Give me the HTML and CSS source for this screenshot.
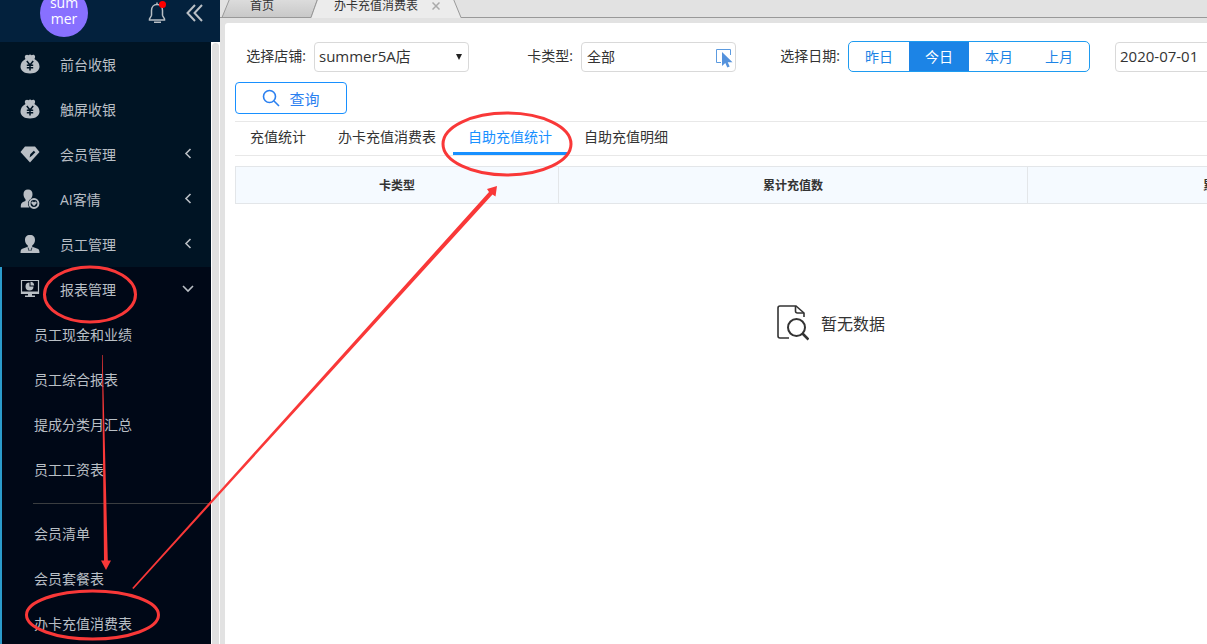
FILE: index.html
```html
<!DOCTYPE html>
<html lang="zh-CN">
<head>
    <meta charset="UTF-8">
    <meta name="viewport" content="width=device-width, initial-scale=1.0">
    <title>办卡充值消费表</title>
    <link rel="stylesheet" href="styles.css">
</head>
<body>
    <svg class="symbols" aria-hidden="true">
        <symbol id="icon-money" viewBox="0 0 20 20">
            <path fill="currentColor" d="M5.500 5C4.600 3.600 4.600 2 5.500 1.200c1.200-.9 2.200-.6 3 0 .9-.8 2.200-.8 3.100 0 .8-.6 2-.8 2.900 0 .9.8.8 2.400-.1 3.800 3 1.600 5.100 4.200 5.100 7.500 0 4.200-3.700 7-9.500 7S.5 16.700.5 12.500C.5 9.200 2.500 6.600 5.500 5z"/>
            <path fill="none" stroke="#001424" stroke-width="1.500" d="M6.800 7L10 11l3.200-4M10 11v5.500M6.800 11.300h6.400M6.800 13.800h6.400"/>
        </symbol>
        <symbol id="icon-left" viewBox="0 0 12 12">
            <path fill="none" stroke="currentColor" stroke-width="1.600" d="M8.500 1L4 5.500 8.500 10"/>
        </symbol>
    </svg>

    <div class="layout">
        <aside class="sidebar">
            <div class="user-bar">
                <div class="avatar">sum<br>mer</div>
                <button class="icon-btn bell" aria-label="消息">
                    <svg width="18" height="22" viewBox="0 0 18 22" fill="none" stroke="currentColor" stroke-width="1.500">
                        <path d="M3.500 14.500V9.500C3.500 6 5.700 3.500 9 3.500s5.500 2.500 5.500 6v5M3.500 14.500L1.500 18v1h15v-1l-2-3.500M6 21.200h7M9 1.500v2"/>
                    </svg>
                    <span class="dot"></span>
                </button>
                <button class="icon-btn" aria-label="收起">
                    <svg width="18" height="18" viewBox="0 0 18 18" fill="none" stroke="currentColor" stroke-width="2">
                        <path d="M9 1L1.500 9 9 17M16 1L8.500 9l7.500 8"/>
                    </svg>
                </button>
            </div>
            <div class="nav-wrap">
                <nav class="nav">
                    <a class="nav-item" href="#"><svg class="nav-icon"><use href="#icon-money"/></svg>前台收银</a>
                    <a class="nav-item" href="#"><svg class="nav-icon"><use href="#icon-money"/></svg>触屏收银</a>
                    <a class="nav-item" href="#">
                        <svg class="nav-icon" viewBox="0 0 20 20">
                            <path fill="currentColor" d="M5 2.500h10L19.500 8 10 18.500.5 8z"/>
                            <path fill="none" stroke="#001424" stroke-width="1.200" d="M10.500 12l.3-1.500 3-3 .7.700-3 3z"/>
                        </svg>会员管理
                        <svg class="arrow"><use href="#icon-left"/></svg>
                    </a>
                    <a class="nav-item" href="#">
                        <svg class="nav-icon" viewBox="0 0 20 20">
                            <path fill="currentColor" d="M8 .5c3 0 4.500 2 4.500 4.800 0 2-.7 3.600-1.800 4.700C9 11 8 12.500 8 14.500c0 1.800.6 3 1.500 4H.8c0-4.500.7-5 4.700-6.500v-1.800C4.300 9 3.500 7.200 3.500 5.300 3.500 2.500 5 .5 8 .5z"/>
                            <circle cx="14" cy="14.500" r="4.400" fill="none" stroke="currentColor" stroke-width="2"/>
                            <path fill="currentColor" d="M14 17l-2.500-2.500c-.8-1.600 1.200-2.700 2.500-1.300 1.300-1.400 3.300-.3 2.500 1.300z"/>
                        </svg>AI客情
                        <svg class="arrow"><use href="#icon-left"/></svg>
                    </a>
                    <a class="nav-item" href="#">
                        <svg class="nav-icon" viewBox="0 0 20 20">
                            <path fill="currentColor" d="M10 1c3.500 0 5 2 5 5 0 2.500-1.200 4.500-2.800 5.500v1.300l4.800 1.700c1.800.6 2.500 1.500 2.500 4.500H.5c0-3 .7-3.900 2.500-4.500l4.800-1.700v-1.300C6.200 10.500 5 8.500 5 6c0-3 1.500-5 5-5z"/>
                            <path fill="none" stroke="#001424" stroke-width=".8" d="M8 13.500l1.200 3.500M12 13.500L10.800 17"/>
                        </svg>员工管理
                        <svg class="arrow"><use href="#icon-left"/></svg>
                    </a>
                    <div class="nav-group">
                        <a class="nav-item" href="#">
                            <svg class="nav-icon" viewBox="0 0 20 20">
                                <path fill="none" stroke="currentColor" stroke-width="1.200" d="M1.500 1.500h17v13h-17z"/>
                                <path fill="currentColor" d="M1 12.500h18V15H1zM8 15h4v1.500h3V18H5v-1.500h3zM9.500 3.500V7.500h4A4 4 0 1 1 9.500 3.500z"/>
                                <path fill="currentColor" d="M10.500 2.800A4 4 0 0 1 14.200 6.500h-3.700z"/>
                            </svg>报表管理
                            <svg class="arrow" viewBox="0 0 12 12"><path fill="none" stroke="currentColor" stroke-width="1.600" d="M1 3l5 5 5-5"/></svg>
                        </a>
                        <a class="sub-item" href="#">员工现金和业绩</a>
                        <a class="sub-item" href="#">员工综合报表</a>
                        <a class="sub-item" href="#">提成分类月汇总</a>
                        <a class="sub-item" href="#">员工工资表</a>
                        <hr class="nav-line">
                        <a class="sub-item" href="#">会员清单</a>
                        <a class="sub-item" href="#">会员套餐表</a>
                        <a class="sub-item" href="#">办卡充值消费表</a>
                    </div>
                </nav>
                <div class="scrollbar"></div>
            </div>
        </aside>

        <main class="main">
            <div class="page-tabs">
                <svg class="tab-shapes" width="250" height="18" aria-hidden="true">
                    <defs>
                        <linearGradient id="tabFill" x1="0" y1="0" x2="0" y2="1">
                            <stop offset="0" stop-color="#dedede"/>
                            <stop offset="1" stop-color="#c8c8c8"/>
                        </linearGradient>
                    </defs>
                    <path fill="url(#tabFill)" stroke="#999" d="M2 17.500L10 -2H98L91 17.500z"/>
                    <path fill="#ececec" d="M91 18L98 -2H233L241 18z"/>
                    <path fill="none" stroke="#999" d="M91 17.500L98 -2M233 -2L241 17.500"/>
                </svg>
                <a class="page-tab" href="#">首页</a>
                <a class="page-tab" href="#">办卡充值消费表</a>
                <button class="tab-close" aria-label="关闭">
                    <svg width="8" height="8" viewBox="0 0 8 8" stroke="#aaa" stroke-width="1.500"><path d="M.5.5l7 7M7.500.5l-7 7"/></svg>
                </button>
            </div>

            <div class="panel">
                <form class="filters">
                    <div class="filter-row">
                        <label class="field-label" for="shop">选择店铺:</label>
                        <div class="select-box">
                            <select class="control" id="shop">
                                <option>summer5A店</option>
                            </select>
                        </div>
                        <label class="field-label next" for="cardType">卡类型:</label>
                        <div class="picker">
                            <input class="control" type="text" id="cardType" value="全部">
                            <svg class="picker-icon" width="18" height="20" viewBox="0 0 18 20">
                                <path fill="none" stroke="#5c9be0" d="M6 14.500H1.500v-13h14V7"/>
                                <path fill="#5592dc" d="M7 4v14l3.300-3 2 4.500 2.400-1.100-2-4.200H17.500z"/>
                            </svg>
                        </div>
                        <label class="field-label next" for="startDate">选择日期:</label>
                        <div class="day-group">
                            <button type="button" class="day">昨日</button>
                            <button type="button" class="day active">今日</button>
                            <button type="button" class="day">本月</button>
                            <button type="button" class="day">上月</button>
                        </div>
                        <input class="control date" type="text" id="startDate" value="2020-07-01">
                    </div>
                    <button type="button" class="btn-search">
                        <svg width="18" height="18" viewBox="0 0 18 18" fill="none" stroke="#2b80f0" stroke-width="1.600">
                            <circle cx="7.500" cy="7.500" r="6"/>
                            <path d="M12 12l5 5"/>
                        </svg>查询
                    </button>
                </form>

                <div class="tabs">
                    <button class="tab">充值统计</button>
                    <button class="tab">办卡充值消费表</button>
                    <button class="tab active">自助充值统计</button>
                    <button class="tab">自助充值明细</button>
                </div>

                <table class="report">
                    <thead>
                        <tr>
                            <th class="col-type">卡类型</th>
                            <th class="col-count">累计充值数</th>
                            <th>累计金额</th>
                        </tr>
                    </thead>
                </table>
                <div class="empty">
                    <svg width="32" height="36" viewBox="0 0 32 36" fill="none" stroke="#333" stroke-width="2">
                        <path stroke-width="1.600" d="M12 33H3c-1.300 0-2-.7-2-2V3c0-1.300.7-2 2-2h16l8 7v4"/>
                        <path stroke-width="1.600" d="M18.500 1v5c0 1.500.5 2 2 2H27"/>
                        <circle cx="19.500" cy="22.500" r="8.500"/>
                        <path stroke-width="2.600" d="M25.500 28.500l6 6"/>
                    </svg>
                    暂无数据
                </div>
            </div>
        </main>
    </div>

    <!-- red guide marks over the page -->
    <svg class="marks" width="1207" height="644" aria-hidden="true">
        <g fill="none" stroke="#f93838" stroke-width="3">
            <ellipse cx="90" cy="294.500" rx="45.500" ry="27.500"/>
            <ellipse cx="92.500" cy="615" rx="66" ry="24"/>
            <ellipse cx="507" cy="144" rx="64" ry="31"/>
        </g>
        <g fill="#f93838">
            <path d="M102 355h.6L107.800 560.500h3.200L106 570l-5-9.500h3z"/>
            <path d="M132.200 588L489 192l-2-3 10-3-1.500 10.500-3-2L133.500 589z"/>
        </g>
    </svg>
</body>
</html>
```

FILE: styles.css
```css
* { box-sizing: border-box; }
body { margin: 0; height: 100vh; overflow: hidden; font-family: "Open Sans", "Noto Sans CJK SC", sans-serif; font-size: 14px; color: #333; background: #e2e2e2; }
button, input, select { font-family: inherit; font-size: 14px; color: inherit; margin: 0; }
button { padding: 0; border: none; background: none; cursor: pointer; }
a { color: inherit; text-decoration: none; }
svg { flex: none; }
.symbols { display: none; }
.layout { display: flex; height: 100vh; }

/* sidebar */
.sidebar { flex: none; width: 220px; display: flex; flex-direction: column; color: #b9bfc5; }
.user-bar { flex: none; display: flex; align-items: flex-end; height: 42px; padding: 0 16px 5px 40px; overflow: hidden; background: #03213d; }
.avatar { flex: none; width: 48px; height: 48px; padding-top: 6px; margin-right: auto; border-radius: 50%; background: #8870ff; color: #fff; text-align: center; line-height: 16px; }
.icon-btn { position: relative; display: flex; margin-bottom: 15px; color: #b9bfc5; }
.bell { margin: 0 20px 14px 0; }
.dot { position: absolute; top: 0; right: 0; width: 7px; height: 7px; border-radius: 50%; background: red; }
.nav-wrap { flex: 1; display: flex; min-height: 0; background: #fff; }
.nav { flex: 1; overflow: hidden; background: #001424; }
.scrollbar { width: 7px; margin: 1px 1px 0; border-radius: 4px 4px 0 0; background: #e0e0e0; }
.nav-item { display: flex; align-items: center; height: 45px; padding: 0 17px 1px 20px; }
.nav-icon { width: 20px; height: 20px; margin-right: 20px; }
.arrow { width: 12px; height: 12px; margin-left: auto; }
.nav-group { border-left: 2px solid #2b9bcb; background: #000817; }
.nav-group .nav-item { padding-left: 18px; }
.sub-item { display: block; height: 45px; padding-left: 32px; line-height: 45px; }
.nav-line { height: 1px; margin: 11px 0 7px 31px; border: none; background: #3a3d40; }

/* opened pages */
.main { flex: 1; min-width: 0; overflow: hidden; display: flex; flex-direction: column; }
.page-tabs { position: relative; flex: none; display: flex; align-items: flex-end; height: 18px; padding-left: 30px; border-bottom: 1px solid #999; }
.tab-shapes { position: absolute; left: 0; top: 0; }
.page-tab { position: relative; margin-right: 60px; line-height: 22px; font-size: 12px; }
.page-tab + .page-tab { margin-right: 14px; }
.tab-close { position: relative; display: flex; margin-bottom: 7px; }

.panel { flex: 1; min-width: 1212px; margin: 5px 0 0 5px; padding: 18px 10px; background: #fff; border-radius: 3px 0 0 0; }
.filter-row { display: flex; align-items: center; height: 31px; }
.field-label { flex: none; width: 71px; margin-right: 8px; padding-bottom: 4px; text-align: right; }
.next { margin-left: 33px; }
.control { width: 155px; height: 30px; padding: 0 5px 2px; border: 1px solid #d9d9d9; border-radius: 4px; background: #fff; outline: none; }
.select-box, .picker { position: relative; flex: none; display: flex; }
.select-box::after { content: ""; position: absolute; right: 7px; top: 12px; border: 3px solid transparent; border-top: 6px solid #222; border-bottom: 0; }
.select-box .control { appearance: none; padding: 0 4px 2px; font-size: 15px; }
.picker-icon { position: absolute; right: 3px; top: 6px; }
.day-group { flex: none; display: flex; width: 242px; height: 31px; border: 1px solid #1e9bf0; border-radius: 5px; overflow: hidden; }
.day { flex: 1; padding-bottom: 2px; color: #1c84e6; }
.day.active { background: #1c84e6; color: #fff; }
.date { flex: none; margin-left: 25px; padding: 0 4px 2px; font-size: 15px; }
.btn-search { display: flex; align-items: center; justify-content: center; gap: 9px; width: 112px; height: 32px; margin-top: 10px; border: 1px solid #1890ff; border-radius: 4px; color: #2b80f0; font-size: 15px; }

.tabs { display: flex; gap: 2px; height: 35px; margin-top: 7px; border-top: 1px solid #e8e8e8; border-bottom: 1px solid #e8e8e8; }
.tab { height: 33px; padding: 0 15px 2px; border-bottom: 3px solid transparent; }
.tab.active { border-color: #1890ff; color: #1890ff; }

.report { width: 100%; margin-top: 10px; border-collapse: collapse; table-layout: fixed; }
.report th { height: 37px; padding: 0; border: 1px solid #e3e6e9; background: #f5faff; font-size: 12px; }
.col-type { width: 323px; }
.col-count { width: 469px; }
.empty { display: flex; align-items: center; justify-content: center; gap: 12px; margin-top: 101px; font-size: 16px; }

.marks { position: absolute; left: 0; top: 0; pointer-events: none; }
```
